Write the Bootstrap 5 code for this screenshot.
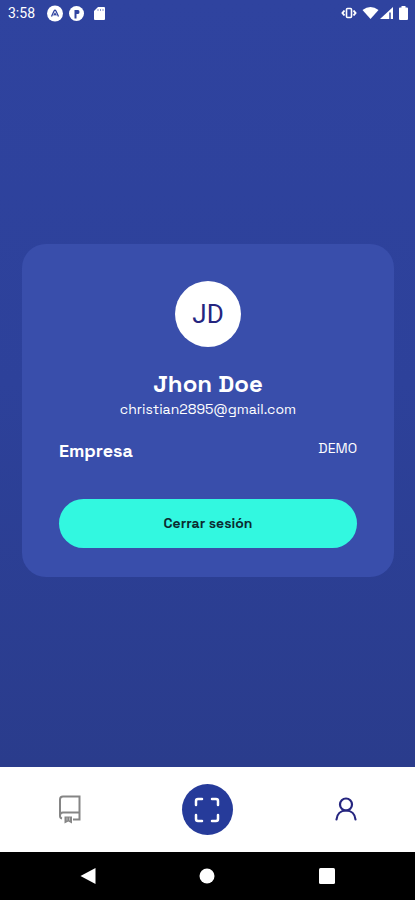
<!DOCTYPE html>
<html lang="es">
<head>
<meta charset="utf-8">
<meta name="viewport" content="width=device-width, initial-scale=1">
<title>Perfil</title>
<link href="https://cdn.jsdelivr.net/npm/bootstrap@5.3.0/dist/css/bootstrap.min.css" rel="stylesheet">
<style>
  body { font-family: "Space Grotesk", Inter, "Liberation Sans", sans-serif; background: #fff; }
  .screen { background: linear-gradient(#2f439f, #2d419a 50%, #2a3c8c); }
  .status-bar { height: 26px; padding: 0 6px 0 8px; font: 14px/26px Roboto, sans-serif; }
  .status-bar svg, .tab-bar svg, .system-bar svg { display: block; }
  .profile-area { padding: 28px 21px 0 22px; }
  .profile-card { background: #394eab; border-radius: 24px; padding: 37px 37px 29px; }
  .avatar { width: 66px; height: 66px; color: #25257f; font: 26px/66px Roboto, sans-serif; }
  .person-name { font-size: 24px; line-height: 28px; font-weight: 700; margin: 23px 0 0; }
  .person-mail { font-size: 14px; line-height: 22px; }
  .company { margin-top: 17px; }
  .company dt { font-size: 18px; line-height: 28px; font-weight: 700; }
  .company dd { font-size: 14px; line-height: 22px; }
  .btn-logout, .btn-logout:hover { background: #32f8e0; color: #0b2b30; font-size: 14px; font-weight: 600; height: 49px; margin-top: 34px; }
  .tab-bar { height: 85px; }
  .scan { width: 51px; height: 51px; background: #263b9a; }
  .system-bar { height: 48px; padding: 0 28px; background: #000; }
</style>
<script src="https://cdn.jsdelivr.net/npm/bootstrap@5.3.0/dist/js/bootstrap.bundle.min.js"></script>
</head>
<body class="d-flex flex-column min-vh-100">
<div class="screen flex-grow-1 d-flex flex-column text-white">
  <header class="status-bar d-flex align-items-center">
    <span class="me-2">3:58</span>
    <svg width="17" height="17" viewBox="0 0 17 17" class="ms-1" aria-hidden="true"><circle cx="8" cy="8.500" r="8" fill="#fff"/><path d="M4.500 11.500 7 6q1-1.500 2 0l2.500 5.500M6.700 10.500l1.300-2 1.300 2" fill="none" stroke="#3044a0" stroke-width="1.300"/></svg>
    <svg class="ms-1" width="17" height="17" viewBox="0 0 17 17" aria-hidden="true"><circle cx="8.500" cy="8.500" r="7.500" fill="#fff"/><path d="M6.500 13.500V5H10q1.500 0 1.500 2T10 9H8.500v4.500z" fill="#3044a0"/></svg>
    <svg class="ms-2" width="13" height="15" viewBox="0 0 13 15" aria-hidden="true"><path d="M5 1h6q1 0 1 1v11q0 1-1 1H2q-1 0-1-1V5z" fill="#fff"/><path d="M5 3v2M7.500 3v2M10 3v2" stroke="#8994cc"/></svg>
    <svg class="ms-auto" width="16" height="14" viewBox="0 0 16 14" fill="none" stroke="#fff" aria-hidden="true"><rect x="5.500" y="2.500" width="5" height="9" rx="1" stroke-width="1.600"/><path d="M3.500 4.500 1.500 7l2 2.500M12.500 4.500l2 2.500-2 2.500" stroke-width="2"/></svg>
    <svg class="ms-1" width="19" height="14" viewBox="0 0 19 14" aria-hidden="true"><path d="M1.500 4Q9.500 -2 17.500 4L9.500 13z" fill="#fff"/></svg>
    <svg width="14" height="14" viewBox="0 0 14 14" aria-hidden="true"><path d="M0 13 13 1v12z" fill="#fff"/><path d="M10 6.500V13" stroke="#3044a0" stroke-width="1.500"/></svg>
    <svg class="ms-1" width="11" height="16" viewBox="0 0 11 16" aria-hidden="true"><path d="M3.500 1h4v1.500H9q1 0 1 1V14q0 1-1 1H2q-1 0-1-1V3.500q0-1 1-1h1.500z" fill="#fff"/></svg>
  </header>
  <main class="profile-area flex-grow-1 d-flex flex-column justify-content-center">
    <section class="profile-card text-center">
      <div class="avatar rounded-circle bg-white mx-auto">JD</div>
      <h1 class="person-name">Jhon Doe</h1>
      <div class="person-mail">christian2895@gmail.com</div>
      <dl class="company d-flex justify-content-between mb-0">
        <dt>Empresa</dt>
        <dd class="mb-0">DEMO</dd>
      </dl>
      <button type="button" class="btn btn-logout border-0 rounded-pill w-100">Cerrar sesión</button>
    </section>
  </main>
</div>
<nav class="tab-bar bg-white row g-0 align-items-center" aria-label="Principal">
  <a href="#" class="col d-flex justify-content-center" aria-label="Registros">
    <svg width="23" height="29" viewBox="0 0 23 29" fill="none" stroke="#858585" stroke-width="2" aria-hidden="true"><path d="M4 23.500Q2 23 2 21V4.500q0-3 3-3h16.500v23H15M2 20.500q0-3 3-3h16.500"/><path d="M6.500 21.500h7.500V28.500l-3.700-2-3.800 2z" fill="#858585" stroke="none"/><path d="M9 22.500v3M11.500 22.500v3" stroke="#bbb" stroke-width="1"/></svg>
  </a>
  <div class="col d-flex justify-content-center">
    <button type="button" class="scan btn border-0 rounded-circle p-0 d-flex align-items-center justify-content-center" aria-label="Escanear">
      <svg width="26" height="26" viewBox="0 0 26 26" fill="none" stroke="#fff" stroke-width="2.500" stroke-linecap="round" stroke-linejoin="round" aria-hidden="true"><path d="M2 8V4q0-2 2-2h4M18 2h4q2 0 2 2v4M24 18v4q0 2-2 2h-4M8 24H4q-2 0-2-2v-4"/></svg>
    </button>
  </div>
  <a href="#" class="col d-flex justify-content-center" aria-label="Perfil">
    <svg width="24" height="26" viewBox="0 0 24 26" fill="none" stroke="#25257f" stroke-width="2.200" stroke-linecap="round" aria-hidden="true"><circle cx="12" cy="7.500" r="6"/><path d="M2.500 22.500c.5-5.500 4-9 9.500-9s9 3.500 9.500 9"/></svg>
  </a>
</nav>
<div class="system-bar d-flex align-items-center justify-content-around" aria-hidden="true">
  <svg width="18" height="18" viewBox="0 0 18 18"><path d="M16.500 1v16L1.500 9z" fill="#fff"/></svg>
  <svg width="18" height="18" viewBox="0 0 18 18"><circle cx="9" cy="9" r="7.500" fill="#fff"/></svg>
  <svg width="18" height="18" viewBox="0 0 18 18"><rect x="1" y="1" width="16" height="16" rx="1.500" fill="#fff"/></svg>
</div>
</body>
</html>
